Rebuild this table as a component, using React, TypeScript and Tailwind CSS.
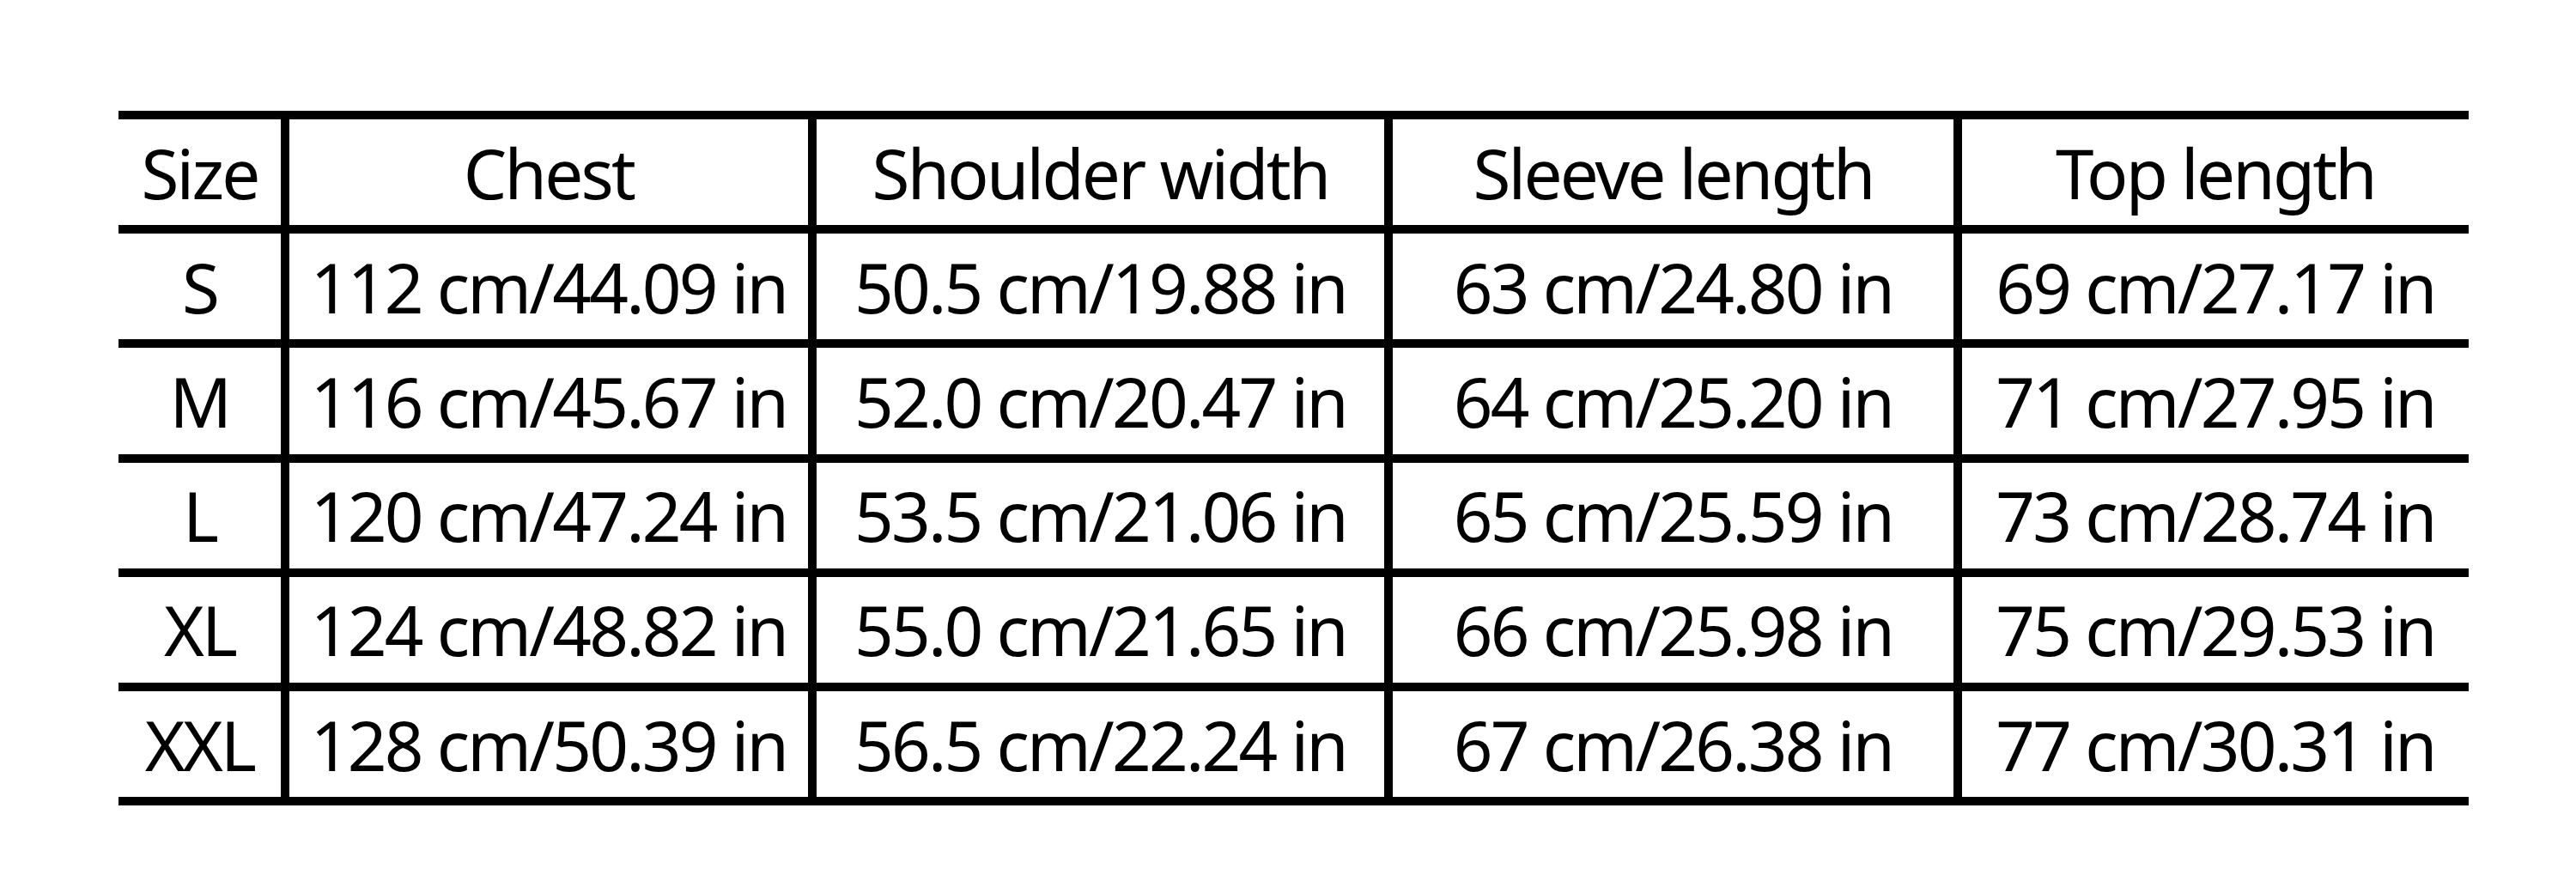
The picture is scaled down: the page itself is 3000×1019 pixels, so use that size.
const COLUMNS = [
  { label: "Size",           width: "w-[189px]", border: false },
  { label: "Chest",          width: "w-[614px]", border: true },
  { label: "Shoulder width", width: "w-[671px]", border: true },
  { label: "Sleeve length",  width: "w-[663px]", border: true },
  { label: "Top length",     width: "w-[600px]", border: true },
];

const ROWS: string[][] = [
  ["S",   "112 cm/44.09 in", "50.5 cm/19.88 in", "63 cm/24.80 in", "69 cm/27.17 in"],
  ["M",   "116 cm/45.67 in", "52.0 cm/20.47 in", "64 cm/25.20 in", "71 cm/27.95 in"],
  ["L",   "120 cm/47.24 in", "53.5 cm/21.06 in", "65 cm/25.59 in", "73 cm/28.74 in"],
  ["XL",  "124 cm/48.82 in", "55.0 cm/21.65 in", "66 cm/25.98 in", "75 cm/29.53 in"],
  ["XXL", "128 cm/50.39 in", "56.5 cm/22.24 in", "67 cm/26.38 in", "77 cm/30.31 in"],
];

function Row({ cells, last }: { cells: string[]; last?: boolean }) {
  return (
    <div className={`flex border-t-[10px] border-black ${last ? "border-b-[10px]" : ""}`}>
      {cells.map((text, i) => (
        <div
          key={i}
          className={`${COLUMNS[i].width} h-[123.2px] shrink-0 flex items-center justify-center whitespace-nowrap ${
            COLUMNS[i].border ? "border-l-[10px] border-black" : ""
          }`}
        >
          <span className="tracking-[-0.035em]">{text}</span>
        </div>
      ))}
    </div>
  );
}

export default function App() {
  return (
    <div
      className="w-[3000px] h-[1019px] bg-white text-black pt-[129px] pl-[138px]"
      style={{ fontFamily: '"Noto Sans", "Open Sans", sans-serif' }}
    >
      <div className="w-[2737px] text-[80px] leading-none">
        <Row cells={COLUMNS.map((c) => c.label)} />
        {ROWS.map((r, i) => (
          <Row key={r[0]} cells={r} last={i === ROWS.length - 1} />
        ))}
      </div>
    </div>
  );
}
